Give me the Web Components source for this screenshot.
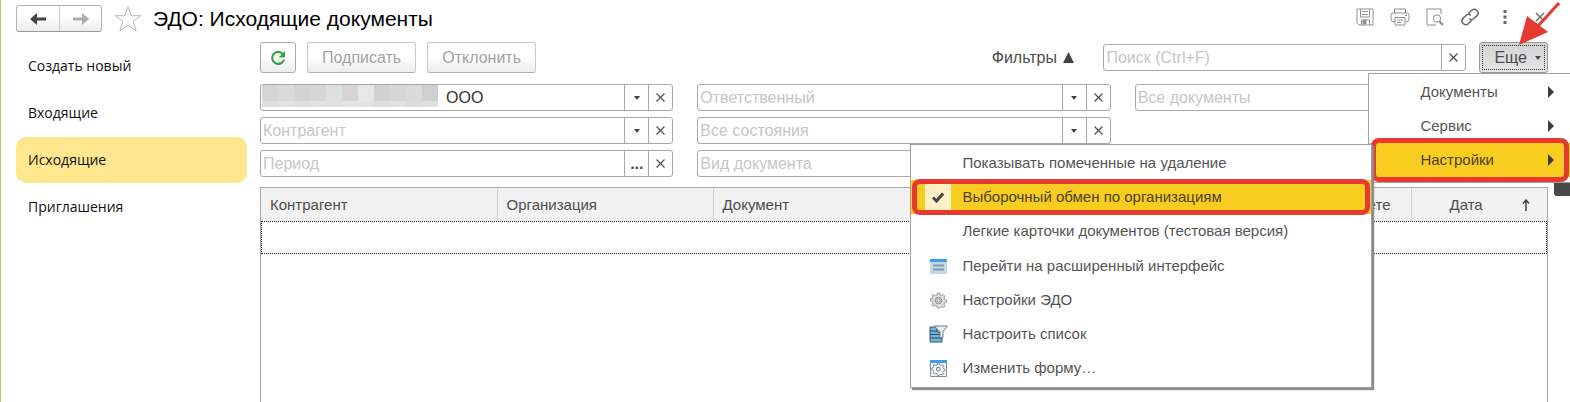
<!DOCTYPE html>
<html lang="ru">
<head>
<meta charset="utf-8">
<title>ЭДО: Исходящие документы</title>
<style>
	html, body {
		height: 100%;
		margin: 0;
		overflow: hidden;
	}

	body {
		background: #fff;
		color: #4d4d4d;
		font: 16px/20px "Liberation Sans", Arial, sans-serif;
	}
</style>
</head>
<body>
<edo-page></edo-page>

<template id="page-template">
	<style>
		:host {
			display: flex;
			flex-direction: column;
			min-height: 100vh;
			box-sizing: border-box;
			border-left: 1px solid #d6bc66;
		}

		.body {
			display: flex;
			flex: 1;
			gap: 13px;
			padding: 10px 22px 0 15px;
		}

		main {
			display: flex;
			flex: 1;
			flex-direction: column;
			min-width: 0;
		}

		.filters {
			display: grid;
			grid-template-columns: repeat(3, 1fr);
			gap: 6px 24px;
			margin: 11px 0 10px;
		}

		.filters :nth-child(4) {
			grid-column: 1;
		}
		.filters :nth-child(6) {
			grid-column: 1;
		}
	</style>
	<page-header>ЭДО: Исходящие документы</page-header>
	<div class="body">
		<side-nav></side-nav>
		<main>
			<command-bar></command-bar>
			<div class="filters">
				<filter-field label="Организация" value="ООО" buttons="drop clear" masked></filter-field>
				<filter-field label="Ответственный" buttons="drop clear"></filter-field>
				<filter-field label="Все документы" buttons="drop clear"></filter-field>
				<filter-field label="Контрагент" buttons="drop clear"></filter-field>
				<filter-field label="Все состояния" buttons="drop clear"></filter-field>
				<filter-field label="Период" buttons="pick clear"></filter-field>
				<filter-field label="Вид документа" buttons="drop clear"></filter-field>
			</div>
			<document-list></document-list>
		</main>
	</div>
</template>

<template id="header-template">
	<style>
		:host {
			display: flex;
			align-items: center;
			height: 27px;
			padding: 5px 13px 0 15px;
		}

		.history {
			display: flex;
			height: 27px;
			box-sizing: border-box;
			border: 1px solid #b4b4b4;
			border-bottom-color: #999;
			border-radius: 3px;
			background: linear-gradient(#fff 40%, #ececec);
		}

		button {
			display: flex;
			align-items: center;
			justify-content: center;
			padding: 0;
			border: 0;
			background: none;
			color: #6e6e6e;
		}

		.history button {
			width: 42px;
		}

		.history button + button {
			border-left: 1px solid #cfcfcf;
		}

		.star {
			margin: 0 11px 0 12px;
		}

		h1 {
			flex: 1;
			margin: 0;
			color: #000;
			font-size: 21px;
			font-weight: 400;
			line-height: 26px;
		}

		.tools {
			display: flex;
			margin-bottom: 3px;
		}

		.tools button {
			width: 35px;
			height: 24px;
		}

		svg {
			display: block;
			fill: none;
			stroke: currentColor;
		}
	</style>
	<div class="history">
		<button aria-label="Назад">
			<svg width="18" height="12" viewBox="0 0 18 12" style="color:#444"><path d="M17 6H4" stroke-width="3"/><path d="M8 0v12L1 6z" fill="currentColor" stroke="none"/></svg>
		</button>
		<button aria-label="Вперед" disabled>
			<svg width="18" height="12" viewBox="0 0 18 12" style="color:#adadad"><path d="M1 6h13" stroke-width="3"/><path d="M10 0v12l7-6z" fill="currentColor" stroke="none"/></svg>
		</button>
	</div>
	<button class="star" aria-label="В избранное">
		<svg width="28" height="27" viewBox="0 0 28 27" style="color:#b5b5b5"><path d="M14 1.5l3.2 9.2h9.7l-7.8 5.8 3 9.3-8.1-5.7-8.1 5.7 3-9.3-7.8-5.8h9.7z"/></svg>
	</button>
	<h1><slot></slot></h1>
	<div class="tools">
		<button aria-label="Сохранить"><svg width="18" height="18" viewBox="0 0 18 18" style="color:#929292"><path d="M1 1h16v16H3l-2-2zM4.500 1v8h9V1M6 3.500h6M6 6.500h6M5.500 17v-5h8v5"/><path d="M7 12h3v4H7z" fill="currentColor"/></svg></button>
		<button aria-label="Печать"><svg width="20" height="18" viewBox="0 0 20 18" style="color:#8c8c8c"><path d="M4.500 5V1h11v4M4.500 13.500H3a2 2 0 0 1-2-2V7a2 2 0 0 1 2-2h14a2 2 0 0 1 2 2v4.500a2 2 0 0 1-2 2h-1.500M5 9.500h10V17H5zM7 12h6M7 14.500h4M15 7.500h2"/></svg></button>
		<button aria-label="Просмотр"><svg width="18" height="18" viewBox="0 0 18 18" style="color:#8c8c8c"><path d="M10 17H1V1h14v5"/><circle cx="11" cy="10.500" r="3.700"/><path d="M13.500 13.500l3.500 3.500" stroke-width="2"/></svg></button>
		<button aria-label="Ссылка"><svg width="20" height="18" viewBox="0 0 20 18" stroke-width="1.500" style="color:#666"><path d="M8.500 5.500l3-3a3.400 3.400 0 0 1 5-.2l.5.500a3.400 3.400 0 0 1 0 4.800L14 10.500a3.400 3.400 0 0 1-4.800 0M11.500 12.500l-3 3a3.400 3.400 0 0 1-5 .2L3 15.200a3.400 3.400 0 0 1 0-4.800L6 7.500a3.400 3.400 0 0 1 4.800 0"/></svg></button>
		<button aria-label="Дополнительно"><svg width="4" height="14" viewBox="0 0 4 14"><path d="M.5 0h3v3h-3zM.5 5.500h3v3h-3zM.5 11h3v3h-3z" fill="#666" stroke="none"/></svg></button>
		<button aria-label="Закрыть"><svg width="10" height="10" viewBox="0 0 10 10" stroke-width="1.500"><path d="M1 1l8 8M9 1L1 9"/></svg></button>
	</div>
</template>

<template id="nav-template">
	<style>
		:host {
			display: block;
			width: 231px;
			padding-top: 1px;
			font: 14px/20px "Open Sans", "Noto Sans", sans-serif;
		}

		nav {
			display: grid;
			gap: 1px;
		}

		a {
			padding: 13px 12px;
			border-radius: 10px;
			color: #111;
			text-decoration: none;
		}

		a[aria-current] {
			background: #ffe78f;
		}
	</style>
	<nav>
		<a href="#new">Создать новый</a>
		<a href="#inbox">Входящие</a>
		<a href="#outbox" aria-current="page">Исходящие</a>
		<a href="#invites">Приглашения</a>
	</nav>
</template>

<template id="command-template">
	<style>
		:host {
			display: flex;
			align-items: center;
			gap: 11px;
		}

		button {
			height: 31px;
			box-sizing: border-box;
			padding: 0 14px;
			border: 1px solid #c8c8c8;
			border-bottom-color: #b0b0b0;
			border-radius: 3px;
			background: linear-gradient(#fff 45%, #ededed);
			color: inherit;
			font: inherit;
		}

		button:disabled {
			color: #a3a3a3;
		}

		.refresh {
			width: 36px;
			padding: 0;
			border-color: #aaa;
		}

		.refresh svg {
			display: block;
			margin: auto;
		}

		.toggle {
			margin-left: auto;
			margin-right: 18px;
			padding: 0;
			border: 0;
			background: none;
		}

		.toggle svg {
			margin-left: 2px;
		}

		filter-field {
			flex: 0 1 363px;
			margin-right: 2px;
		}
	</style>
	<button class="refresh" aria-label="Обновить">
		<svg width="16" height="16" viewBox="0 0 16 16"><path d="M12.800 4A6 6 0 1 0 14 9.500" fill="none" stroke="#3ba244" stroke-width="2.200"/><path d="M15 1v6.500H8.500z" fill="#3ba244"/></svg>
	</button>
	<button disabled>Подписать</button>
	<button disabled>Отклонить</button>
	<button class="toggle" aria-expanded="true">Фильтры <svg width="11" height="11" viewBox="0 0 12 12"><path d="M6 0l6 12H0z" fill="#444"/></svg></button>
	<filter-field label="Поиск (Ctrl+F)" buttons="clear"></filter-field>
	<more-menu></more-menu>
</template>

<template id="field-template">
	<style>
		:host {
			display: flex;
			height: 27px;
			min-width: 0;
			box-sizing: border-box;
			border: 1px solid #a8a8a8;
			border-radius: 3px;
			background: #fff;
		}

		input {
			flex: 1;
			min-width: 0;
			padding: 0 2px;
			border: 0;
			outline: 0;
			background: none;
			color: #333;
			font: inherit;
		}

		input::placeholder {
			color: #c6c6c6;
			opacity: 1;
		}

		button {
			display: flex;
			align-items: center;
			justify-content: center;
			width: 24px;
			padding: 0;
			border: 0;
			border-left: 1px solid #a8a8a8;
			background: none;
			color: #4d4d4d;
			font: bold 16px/20px "Liberation Sans", Arial, sans-serif;
		}

		.mask {
			display: grid;
			grid-template-columns: repeat(11, 16px);
			grid-template-rows: 16px 6px;
			align-content: start;
			margin: 0 6px 0 1px;
		}
	</style>
	<input type="text">
</template>

<template id="list-template">
	<style>
		:host {
			display: block;
			flex: 1;
			border: 1px solid #a8a8a8;
			border-bottom: 0;
		}

		table {
			width: 100%;
			border-collapse: collapse;
			table-layout: fixed;
		}

		th {
			height: 33px;
			padding: 0 9px;
			border-right: 1px solid #cfcfcf;
			background: #f2f2f2;
			font-size: 15px;
			font-weight: 400;
			text-align: left;
			white-space: nowrap;
		}

		th:last-child {
			border-right: 0;
		}

		.state {
			padding-right: 20px;
			text-align: right;
		}

		.date span {
			display: flex;
			align-items: center;
			justify-content: space-between;
			padding: 0 8px 0 29px;
		}

		td {
			height: 33px;
			padding: 0;
		}

		tbody tr {
			outline: 1px dotted #222;
			outline-offset: -1px;
		}
	</style>
	<table>
		<colgroup>
			<col style="width:236px"><col style="width:216px"><col><col style="width:220px"><col style="width:136px">
		</colgroup>
		<thead>
			<tr>
				<th>Контрагент</th>
				<th>Организация</th>
				<th>Документ</th>
				<th class="state">В учете</th>
				<th class="date" aria-sort="ascending"><span>Дата <svg width="8" height="12" viewBox="0 0 8 12"><path d="M4 12V1M1 4.500L4 1l3 3.500" fill="none" stroke="#444" stroke-width="1.500"/></svg></span></th>
			</tr>
		</thead>
		<tbody>
			<tr><td colspan="5"></td></tr>
		</tbody>
	</table>
</template>

<template id="more-template">
	<style>
		:host {
			display: block;
			position: relative;
		}

		.more {
			display: flex;
			align-items: center;
			gap: 8px;
			height: 31px;
			box-sizing: border-box;
			padding: 0 6px 0 14px;
			border: 1px solid #999;
			border-radius: 3px;
			outline: 1px dotted #333;
			outline-offset: -4px;
			background: linear-gradient(#d2d2d2, #e6e6e6);
			color: inherit;
			font: inherit;
		}

		.menu, .submenu {
			position: absolute;
			z-index: 5;
			box-sizing: border-box;
			border: 1px solid #a0a0a0;
			background: #fff;
			font-size: 15px;
		}

		.menu {
			top: 100%;
			right: -23px;
			left: -111px;
			padding: 1px 0 5px;
		}

		.submenu {
			top: 70px;
			right: calc(100% - 3px);
			width: 462px;
			padding: 1px 0 2px;
			box-shadow: 2px 2px 1px #8c8c8c;
		}

		.links {
			margin-top: 1px;
		}

		.pointer {
			position: absolute;
			z-index: 6;
			right: -12px;
			bottom: 28px;
		}

		.hint {
			position: absolute;
			z-index: 4;
			top: 136px;
			right: -30px;
			width: 24px;
			height: 18px;
			border-radius: 3px;
			background: #484848;
		}
	</style>
	<button class="more" aria-haspopup="menu" aria-expanded="true">Еще <svg width="6" height="4" viewBox="0 0 6 4"><path d="M0 0h6L3 4z" fill="#444"/></svg></button>
	<svg class="pointer" width="42" height="44" viewBox="0 0 42 44"><path d="M41 2L20 25" stroke="#e6392f" stroke-width="3"/><path d="M1 44L9 15l8 6 13 10z" fill="#e6392f"/></svg>
	<div class="hint"></div>
	<div class="menu" role="menu">
		<menu-item parent>Документы</menu-item>
		<menu-item parent>Сервис</menu-item>
		<menu-item parent marked>Настройки</menu-item>
		<div class="submenu" role="menu">
			<menu-item>Показывать помеченные на удаление</menu-item>
			<menu-item checked marked>Выборочный обмен по организациям</menu-item>
			<menu-item>Легкие карточки документов (тестовая версия)</menu-item>
			<div class="links">
				<menu-item icon="window">Перейти на расширенный интерфейс</menu-item>
				<menu-item icon="gear">Настройки ЭДО</menu-item>
				<menu-item icon="list">Настроить список</menu-item>
				<menu-item icon="form">Изменить форму…</menu-item>
			</div>
		</div>
	</div>
</template>

<template id="item-template">
	<style>
		:host {
			display: block;
			position: relative;
		}

		button {
			display: flex;
			align-items: center;
			width: 100%;
			height: 34px;
			padding: 0 16px 0 14px;
			border: 0;
			background: none;
			color: #555;
			font: inherit;
			text-align: left;
		}

		.icon {
			display: flex;
			align-items: center;
			justify-content: center;
			width: 26px;
			height: 26px;
			margin-right: 11px;
		}

		.text {
			flex: 1;
			white-space: nowrap;
		}

		:host([checked]) .icon {
			background: #fdf0c4;
		}

		:host([marked]) button {
			background: #f9cd20;
			color: #4a4020;
		}

		/* red frame around the step the reader has to click */
		:host([marked])::after {
			content: "";
			position: absolute;
			inset: -1px 1px;
			border: 5px solid #e6392f;
			border-radius: 8px;
		}

		:host([parent][marked])::after {
			inset: -5px 1px -5px 2px;
		}
	</style>
	<button role="menuitem">
		<span class="icon"></span>
		<span class="text"><slot></slot></span>
	</button>
</template>

<script>
const gearPath = "M8 1l2 0 .7 2.200 1.600.7 2-1 1.500 1.500-1 2 .7 1.600 2 .7v2l-2 .7-.7 1.600 1 2-1.500 1.500-2-1-1.600.7L10 17H8l-.7-2.200-1.600-.7-2 1-1.500-1.500 1-2-.7-1.600-2-.7v-2l2-.7.7-1.600-1-2L3.700 2.900l2 1 1.600-.7z";

const icons = {
	window: `<svg width="17" height="15" viewBox="0 0 17 15"><path d="M0 0h17v15H0z" fill="#c3d9e2"/><path d="M0 0h17v3H0z" fill="#3d9df2"/><path d="M3 6.500h11M3 10.500h11" stroke="#7f9ba8" stroke-width="2"/></svg>`,
	gear: `<svg width="19" height="19" viewBox="-1 0 20 18"><path d="${gearPath}" fill="#dedede" stroke="#929292"/><circle cx="9" cy="9" r="3.500" fill="#c9c9c9" stroke="#929292"/><circle cx="9" cy="9" r="1.500" fill="#eee" stroke="#999"/></svg>`,
	list: `<svg width="19" height="18" viewBox="0 0 19 18"><path d="M1 2h7v5h5v10H1z" fill="#78b4d8" stroke="#345971"/><path d="M1 6h8M1 9.500h12M1 13h12" stroke="#284b62"/><path d="M5 1h13.500L14 6.500V12l-3 1V6.500z" fill="#e8f0f4" stroke="#6f7c84"/></svg>`,
	form: `<svg width="17" height="17" viewBox="0 0 17 17"><path d="M.5.5h16v16H.5z" fill="#edf3f6" stroke="#7b8c96"/><path d="M0 0h17v3H0z" fill="#3d9df2"/><g transform="translate(1.500 2.500) scale(.76)"><path d="${gearPath}" fill="#fff" stroke="#788690" stroke-width="1.300"/><circle cx="9" cy="9" r="2.500" fill="none" stroke="#788690" stroke-width="1.500"/></g></svg>`,
	check: `<svg width="12" height="11" viewBox="0 0 12 11"><path d="M1 5.500l3.500 3.500L11 1.500" fill="none" stroke="#444" stroke-width="3"/></svg>`,
	parent: `<svg width="6" height="12" viewBox="0 0 6 12"><path d="M0 0l6 6-6 6z" fill="#3d3d3d"/></svg>`,
	drop: `<svg width="6" height="4" viewBox="0 0 6 4"><path d="M0 0h6L3 4z" fill="#444"/></svg>`,
	clear: `<svg width="9" height="9" viewBox="0 0 9 9"><path d="M.5.5l8 8M8.500.5l-8 8" fill="none" stroke="#555" stroke-width="1.300"/></svg>`,
	pick: "..."
};

const buttonLabels = { drop: "Выбрать из списка", clear: "Очистить", pick: "Выбрать" };

class TemplateElement extends HTMLElement {
	constructor() {
		super();
		this.attachShadow({ mode: "open" });
		const template = document.getElementById(this.constructor.template);
		this.shadowRoot.append(template.content.cloneNode(true));
	}
}

class EdoPage extends TemplateElement {
	static template = "page-template";
}

class PageHeader extends TemplateElement {
	static template = "header-template";
}

class SideNav extends TemplateElement {
	static template = "nav-template";
}

class CommandBar extends TemplateElement {
	static template = "command-template";
}

class DocumentList extends TemplateElement {
	static template = "list-template";
}

class FilterField extends TemplateElement {
	static template = "field-template";

	static maskColors = [
		"#d6d5d5", "#dadada", "#d2d3d3", "#d5d6d6", "#dde0e0", "#d6d5d4", "#e6e8e8", "#d0d2d2", "#d6d6d5", "#dadada", "#cfcfcf",
		"#dedede", "#e2e2e1", "#dededf", "#e2e2e2", "#dfe1e1", "#e4e4e3", "#e2e4e4", "#dcdddd", "#e1e1e1", "#dcdcdb", "#e0e0e0"
	];

	connectedCallback() {
		if (this.input) {
			return;
		}

		const label = this.getAttribute("label");
		this.input = this.shadowRoot.querySelector("input");
		this.input.setAttribute("aria-label", label);
		this.input.value = this.getAttribute("value") ?? "";
		this.input.placeholder = label;

		if (this.hasAttribute("masked")) {
			const mask = document.createElement("div");
			mask.className = "mask";
			for (const color of FilterField.maskColors) {
				const cell = document.createElement("i");
				cell.style.background = color;
				mask.append(cell);
			}
			this.input.before(mask);
		}

		for (const name of this.getAttribute("buttons").split(" ")) {
			const button = document.createElement("button");
			button.innerHTML = icons[name];
			button.setAttribute("aria-label", buttonLabels[name]);
			if (name === "clear") {
				button.addEventListener("click", () => {
					this.input.value = "";
				});
			}
			this.shadowRoot.append(button);
		}
	}
}

class MenuItem extends TemplateElement {
	static template = "item-template";

	connectedCallback() {
		const button = this.shadowRoot.querySelector("button");
		const icon = this.shadowRoot.querySelector(".icon");

		if (this.hasAttribute("checked")) {
			button.setAttribute("role", "menuitemcheckbox");
			button.setAttribute("aria-checked", "true");
			icon.innerHTML = icons.check;
		} else if (this.hasAttribute("icon")) {
			icon.innerHTML = icons[this.getAttribute("icon")];
		}

		if (this.hasAttribute("parent") && !button.hasAttribute("aria-haspopup")) {
			button.setAttribute("aria-haspopup", "menu");
			button.insertAdjacentHTML("beforeend", icons.parent);
		}
	}
}

class MoreMenu extends TemplateElement {
	static template = "more-template";

	connectedCallback() {
		const trigger = this.shadowRoot.querySelector(".more");
		const menu = this.shadowRoot.querySelector(".menu");
		trigger.addEventListener("click", () => {
			menu.hidden = !menu.hidden;
			menu.style.display = menu.hidden ? "none" : "";
			trigger.setAttribute("aria-expanded", String(!menu.hidden));
		});
	}
}

customElements.define("menu-item", MenuItem);
customElements.define("filter-field", FilterField);
customElements.define("more-menu", MoreMenu);
customElements.define("page-header", PageHeader);
customElements.define("side-nav", SideNav);
customElements.define("command-bar", CommandBar);
customElements.define("document-list", DocumentList);
customElements.define("edo-page", EdoPage);
</script>
</body>
</html>
